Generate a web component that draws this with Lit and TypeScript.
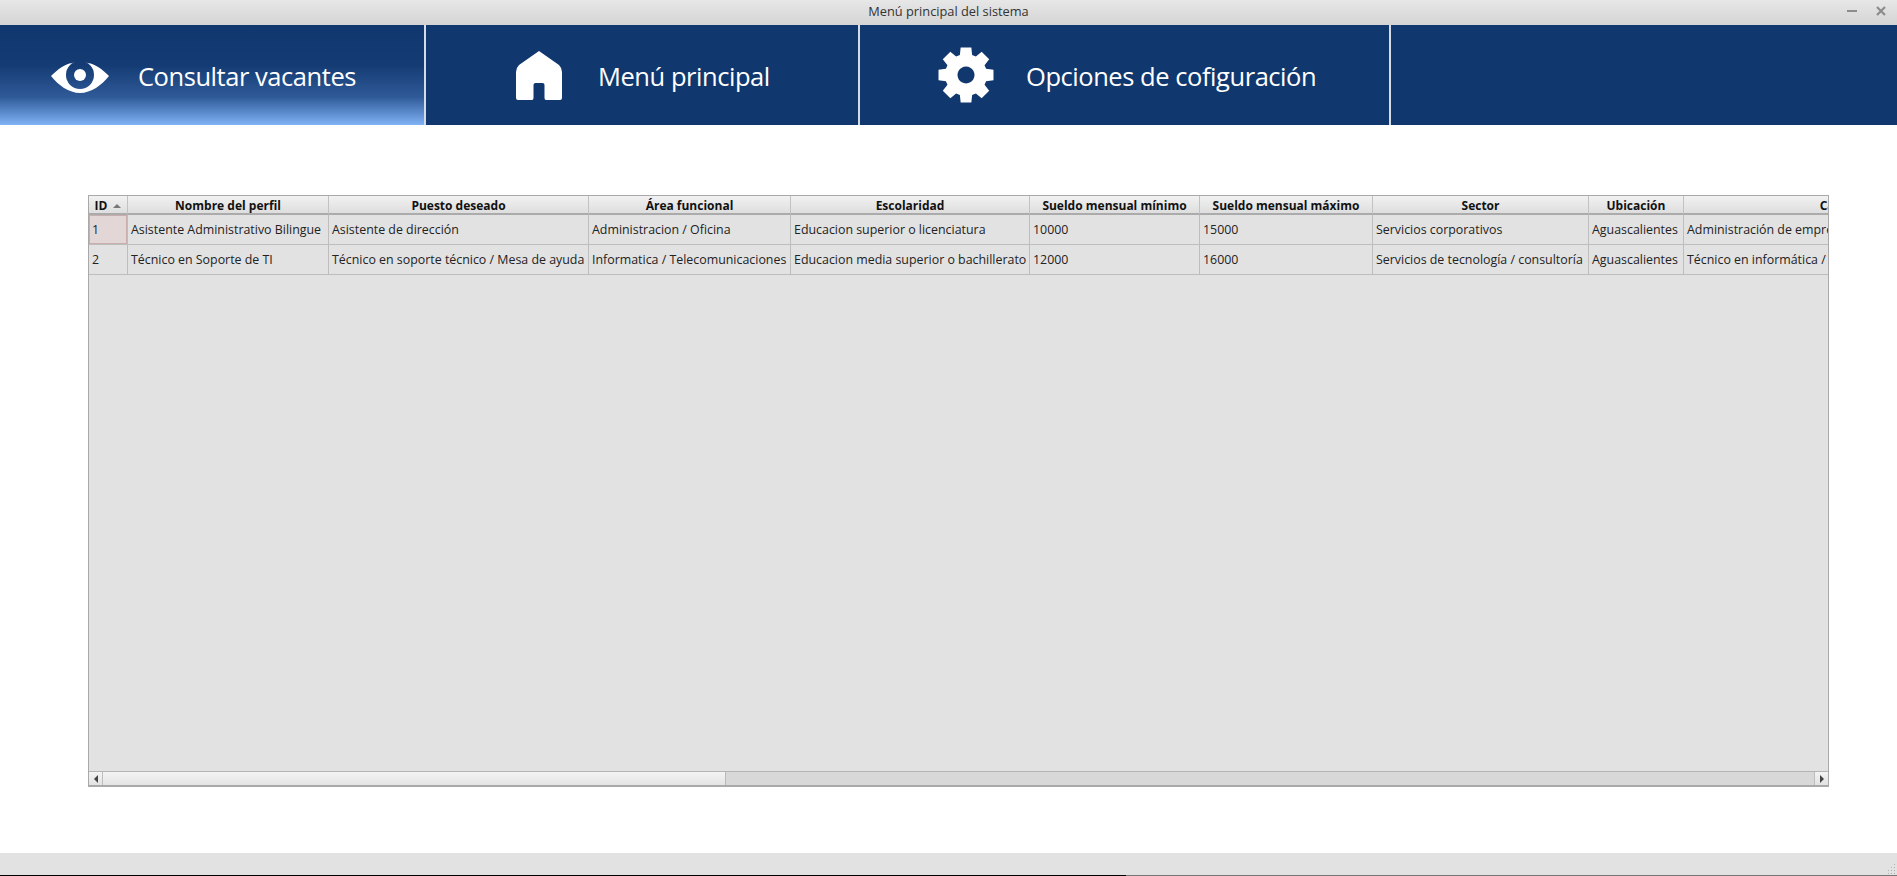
import { LitElement, css, html, svg } from "lit";
import { customElement } from "lit/decorators.js";

const COLUMNS = [
  { title: "ID", width: 39 },
  { title: "Nombre del perfil", width: 201 },
  { title: "Puesto deseado", width: 260 },
  { title: "Área funcional", width: 202 },
  { title: "Escolaridad", width: 239 },
  { title: "Sueldo mensual mínimo", width: 170 },
  { title: "Sueldo mensual máximo", width: 173 },
  { title: "Sector", width: 216 },
  { title: "Ubicación", width: 95 },
  { title: "Carrera", width: 318 },
];

const ROWS = [
  [
    "1",
    "Asistente Administrativo Bilingue",
    "Asistente de dirección",
    "Administracion / Oficina",
    "Educacion superior o licenciatura",
    "10000",
    "15000",
    "Servicios corporativos",
    "Aguascalientes",
    "Administración de empresas",
  ],
  [
    "2",
    "Técnico en Soporte de TI",
    "Técnico en soporte técnico / Mesa de ayuda",
    "Informatica / Telecomunicaciones",
    "Educacion media superior o bachillerato",
    "12000",
    "16000",
    "Servicios de tecnología / consultoría",
    "Aguascalientes",
    "Técnico en informática / sistemas",
  ],
];

// 8 teeth, first one pointing up
function gearPath(cx: number, cy: number, outer: number, root: number) {
  const pts: string[] = [];
  const at = (deg: number, r: number) => {
    const a = ((deg - 90) * Math.PI) / 180;
    return `${(cx + r * Math.cos(a)).toFixed(2)} ${(cy + r * Math.sin(a)).toFixed(2)}`;
  };
  for (let i = 0; i < 8; i++) {
    const c = i * 45;
    pts.push(at(c - 17, root), at(c - 11, outer), at(c + 11, outer), at(c + 17, root));
  }
  return `M${pts.join("L")}Z`;
}

const eyeIcon = svg`
  <svg class="eye" viewBox="0 0 58 32" width="58" height="32">
    <mask id="eye-cut">
      <rect width="58" height="32" fill="white"></rect>
      <circle cx="29" cy="14" r="14" fill="black"></circle>
      <circle cx="29" cy="14" r="6" fill="white"></circle>
    </mask>
    <path
      mask="url(#eye-cut)"
      fill="#fff"
      d="M0 15C7 8 14 3 21 2C25 1 33 1 37 2C44 3 51 8 58 15C51 24 40 32 29 32C18 32 7 24 0 15Z"
    ></path>
  </svg>
`;

const houseIcon = svg`
  <svg viewBox="0 0 46 49" width="46" height="49">
    <path
      fill="#fff"
      d="M23 0L43 14Q46 17 46 21V47Q46 49 44 49H30Q28.5 49 28.5 47V34Q28.5 32 26.5 32H19.5Q17.5 32 17.5 34V47Q17.5 49 16 49H2Q0 49 0 47V21Q0 17 3 14Z"
    ></path>
  </svg>
`;

const gearIcon = svg`
  <svg viewBox="0 0 56 56" width="56" height="56">
    <path
      fill="#fff"
      fill-rule="evenodd"
      d="${gearPath(28, 28, 28, 21)}M28 19.5a8.5 8.5 0 1 0 0.01 0Z"
    ></path>
  </svg>
`;

@customElement("app-root")
export class AppRoot extends LitElement {
  static styles = css`
    :host {
      display: flex;
      flex-direction: column;
      height: 876px;
      background: #fff;
      overflow: hidden;
      font-family: "Open Sans", "Noto Sans", sans-serif;
    }

    .titlebar {
      position: relative;
      flex: 0 0 25px;
      display: flex;
      align-items: center;
      justify-content: center;
      padding-bottom: 3px;
      box-sizing: border-box;
      background: linear-gradient(#e7e7e7, #d4d4d4);
      font-size: 12.8px;
      color: #333;
    }

    .win-buttons {
      position: absolute;
      right: 11px;
      top: 6px;
      display: flex;
      gap: 19px;
    }

    .nav {
      flex: 0 0 100px;
      display: grid;
      grid-template-columns: 426px 434px 531px 1fr;
      background: #10376e;
      color: #fff;
    }

    .nav-item {
      display: flex;
      align-items: center;
      border-right: 2px solid #d5dbe4;
      font-size: 25.5px;
      font-weight: 400;
      letter-spacing: -0.45px;
    }

    .nav-item span {
      margin-top: 2px;
    }

    .nav-item:last-child {
      border-right: none;
    }

    .nav-item.active {
      background: linear-gradient(#10376e 0%, #143b73 40%, #2f5a98 72%, #7fb2f5 100%);
    }

    .consult {
      padding-left: 51px;
      gap: 29px;
    }

    .home {
      padding-left: 90px;
      gap: 36px;
    }

    .config {
      padding-left: 78px;
      gap: 32px;
    }

    .eye {
      margin-top: 4px;
    }

    .content {
      flex: 1;
      min-height: 0;
      padding: 70px 68px 66px 88px;
      display: flex;
    }

    .panel {
      flex: 1;
      display: flex;
      flex-direction: column;
      min-width: 0;
      border: 1px solid #a9a9a9;
      border-bottom-width: 2px;
      background: #e2e2e2;
    }

    .viewport {
      flex: 1;
      min-height: 0;
      overflow: hidden;
    }

    table {
      table-layout: fixed;
      border-collapse: separate;
      border-spacing: 0;
      width: 1913px;
      font-size: 12.4px;
      color: #222;
    }

    th {
      height: 15px;
      padding: 2px 0 0;
      font-size: 12px;
      line-height: 15px;
      font-weight: 700;
      color: #111;
      text-align: center;
      white-space: nowrap;
      overflow: hidden;
      background: linear-gradient(#f1f1f1, #dedede);
      border-right: 1px solid #c2c2c2;
      border-bottom: 2px solid #ababab;
    }

    td {
      height: 29px;
      padding: 0 3px;
      white-space: nowrap;
      overflow: hidden;
      border-right: 1px solid #bdbdbd;
      border-bottom: 1px solid #bdbdbd;
    }

    td.selected {
      background: #e2d6d6;
      box-shadow: inset 0 0 0 1px #c9aeae;
    }

    .sort-id {
      display: flex;
      align-items: center;
      justify-content: center;
      gap: 6px;
    }

    .hbar {
      flex: 0 0 13px;
      display: flex;
      align-items: stretch;
      border-top: 1px solid #b4b4b4;
      background: #d8d8d8;
    }

    .arrow {
      flex: 0 0 13px;
      display: flex;
      align-items: center;
      justify-content: center;
      background: linear-gradient(#f4f4f4, #e2e2e2);
    }

    .arrow.left {
      border-right: 1px solid #bdbdbd;
    }

    .arrow.right {
      border-left: 1px solid #bdbdbd;
    }

    .thumb {
      flex: 0 0 622px;
      background: linear-gradient(#f4f4f4, #e4e4e4);
      border-right: 1px solid #b9b9b9;
    }

    .track {
      flex: 1;
    }

    .status {
      position: relative;
      flex: 0 0 23px;
      display: flex;
      flex-direction: column;
      justify-content: flex-end;
      background: #e2e2e2;
    }

    .edge {
      display: flex;
      height: 1px;
      background: #777;
    }

    .edge span {
      width: 1126px;
      background: #000;
    }

    .grip {
      position: absolute;
      right: 1px;
      bottom: 2px;
    }
  `;

  render() {
    return html`
      <div class="titlebar">
        Menú principal del sistema
        <div class="win-buttons">
          <svg width="10" height="10" viewBox="0 0 10 10">
            <rect x="0" y="4" width="10" height="2" fill="#8c8c8c"></rect>
          </svg>
          <svg width="10" height="10" viewBox="0 0 10 10">
            <path d="M1 1L9 9M9 1L1 9" stroke="#8c8c8c" stroke-width="2.2"></path>
          </svg>
        </div>
      </div>
      <div class="nav">
        <div class="nav-item active consult">${eyeIcon}<span>Consultar vacantes</span></div>
        <div class="nav-item home">${houseIcon}<span>Menú principal</span></div>
        <div class="nav-item config">${gearIcon}<span>Opciones de cofiguración</span></div>
        <div class="nav-item"></div>
      </div>
      <div class="content">
        <div class="panel">
          <div class="viewport">
            <table>
              <colgroup>
                ${COLUMNS.map((c) => html`<col style="width:${c.width}px" />`)}
              </colgroup>
              <thead>
                <tr>
                  ${COLUMNS.map((c, i) =>
                    i === 0
                      ? html`<th>
                          <div class="sort-id">
                            ${c.title}
                            <svg width="8" height="4" viewBox="0 0 8 4">
                              <path d="M4 0L8 4H0Z" fill="#777"></path>
                            </svg>
                          </div>
                        </th>`
                      : html`<th>${c.title}</th>`
                  )}
                </tr>
              </thead>
              <tbody>
                ${ROWS.map(
                  (row, r) => html`<tr>
                    ${row.map(
                      (cell, i) =>
                        html`<td class=${r === 0 && i === 0 ? "selected" : ""}>${cell}</td>`
                    )}
                  </tr>`
                )}
              </tbody>
            </table>
          </div>
          <div class="hbar">
            <div class="arrow left">
              <svg width="4" height="8" viewBox="0 0 4 8"><path d="M4 0V8L0 4Z" fill="#444"></path></svg>
            </div>
            <div class="thumb"></div>
            <div class="track"></div>
            <div class="arrow right">
              <svg width="4" height="8" viewBox="0 0 4 8"><path d="M0 0V8L4 4Z" fill="#444"></path></svg>
            </div>
          </div>
        </div>
      </div>
      <div class="status">
        <svg class="grip" width="10" height="10" viewBox="0 0 10 10" fill="#b0b0b0">
          <rect x="8" y="0" width="1" height="1"></rect>
          <rect x="8" y="3" width="1" height="1"></rect>
          <rect x="8" y="6" width="1" height="1"></rect>
          <rect x="8" y="9" width="1" height="1"></rect>
          <rect x="5" y="3" width="1" height="1"></rect>
          <rect x="5" y="6" width="1" height="1"></rect>
          <rect x="5" y="9" width="1" height="1"></rect>
          <rect x="2" y="6" width="1" height="1"></rect>
          <rect x="2" y="9" width="1" height="1"></rect>
        </svg>
        <div class="edge"><span></span></div>
      </div>
    `;
  }
}
